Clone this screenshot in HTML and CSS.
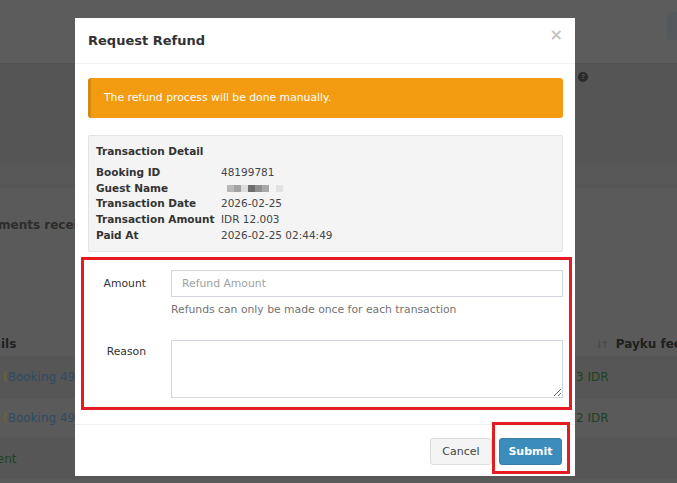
FILE: index.html
```html
<!DOCTYPE html>
<html lang="en">

<head>
    <meta charset="UTF-8">
    <meta name="viewport" content="width=device-width, initial-scale=1.0">
    <title>Request Refund</title>
    <link rel="stylesheet" href="styles.css">
</head>

<body>

    <!-- page behind the dimmed backdrop -->
    <div class="page">
        <div class="topbar">
            <span class="top-btn"></span>
        </div>
        <div class="summary">
            <span class="help-dot">?</span>
        </div>
        <div class="band"></div>
        <div class="card">
            <div class="card-title">Payments received</div>
            <div class="table">
                <div class="row head">
                    <span class="cell-left">Details</span>
                    <span class="cell-right"><span class="sort">&#8595;&#8593;</span>Payku fees</span>
                </div>
                <div class="row">
                    <span class="cell-left"><span class="paren">(</span>Booking 4974</span>
                    <span class="cell-right money">3 IDR</span>
                </div>
                <div class="row">
                    <span class="cell-left"><span class="paren">(</span>Booking 4961</span>
                    <span class="cell-right money">2 IDR</span>
                </div>
                <div class="row">
                    <span class="cell-left money">Payment</span>
                </div>
            </div>
        </div>
    </div>

    <div class="modal">
        <div class="modal-header">
            <h4>Request Refund</h4>
            <span class="close">&times;</span>
        </div>

        <div class="modal-body">
            <div class="alert">The refund process will be done manually.</div>

            <div class="detail">
                <div class="detail-title">Transaction Detail</div>
                <div class="detail-grid">
                    <span class="k">Booking ID</span><span class="v">48199781</span>
                    <span class="k">Guest Name</span>
                    <span class="v blur">
                        <i style="background:#b8b8b8"></i><i style="background:#a2a2a2"></i><i style="background:#dcdcdc"></i><i style="background:#6e6e6e"></i><i style="background:#909090"></i><i style="background:#a8a8a8"></i><i style="background:#f4f4f4"></i><i style="background:#e2e2e2"></i>
                    </span>
                    <span class="k">Transaction Date</span><span class="v">2026-02-25</span>
                    <span class="k">Transaction Amount</span><span class="v">IDR 12.003</span>
                    <span class="k">Paid At</span><span class="v">2026-02-25 02:44:49</span>
                </div>
            </div>

            <div class="mark form">
                <div class="form-row">
                    <label>Amount</label>
                    <div class="field">
                        <input type="text" placeholder="Refund Amount">
                        <p class="help">Refunds can only be made once for each transaction</p>
                    </div>
                </div>
                <div class="form-row">
                    <label>Reason</label>
                    <div class="field">
                        <textarea></textarea>
                    </div>
                </div>
            </div>
        </div>

        <div class="modal-footer">
            <button class="btn btn-default">Cancel</button><span class="mark submit-mark"><button class="btn btn-primary">Submit</button></span>
        </div>
    </div>

</body>

</html>
```

FILE: styles.css
```css
body {
    margin: 0;
    font-family: "DejaVu Sans", Verdana, sans-serif;
    background-color: #5a5a5a;
    overflow: hidden;
}

/* background page (already dimmed) */
.page {
    height: 483px;
}

.topbar {
    height: 63px;
    background-color: #5c5c5c;
    border-bottom: 1px solid #535353;
    display: flex;
    justify-content: flex-end;
    align-items: flex-start;
}

.top-btn {
    width: 20px;
    height: 28px;
    margin-top: 12px;
    margin-right: -10px;
    background-color: #545a5c;
    border-radius: 4px;
}

.summary {
    height: 99px;
    background-color: #555;
    position: relative;
}

.help-dot {
    position: absolute;
    left: 578px;
    top: 8px;
    width: 10px;
    height: 10px;
    border-radius: 50%;
    background-color: #2a2a2a;
    color: #555;
    font-size: 7px;
    font-weight: bold;
    text-align: center;
    line-height: 10px;
}

.band {
    height: 25px;
    background-color: #575757;
}

.card {
    background-color: #5a5a5a;
    padding-top: 30px;
}

.card-title {
    font-size: 12px;
    font-weight: bold;
    color: #2c2c2c;
    margin-left: -26px;
    white-space: nowrap;
}

.table {
    margin-top: 100px;
}

.row {
    display: flex;
    justify-content: space-between;
    align-items: center;
    height: 40px;
    border-top: 1px solid #545454;
    font-size: 12px;
    color: #2f4b63;
    white-space: nowrap;
}

.row:nth-child(even) {
    background-color: #565656;
}

.row.head {
    height: 24px;
    border-top: none;
    font-weight: bold;
    color: #202020;
    background-color: #5a5a5a;
}

.cell-left {
    margin-left: -31px;
}

.row:not(.head) .cell-left {
    margin-left: 3px;
}

.row:last-child .cell-left {
    margin-left: -36px;
}

.cell-right {
    width: 101px;
}

.row.head .cell-right {
    width: 87px;
    margin-right: -5px;
}

.sort {
    color: #4a4a4a;
    font-size: 10px;
    letter-spacing: -3px;
    margin-right: 10px;
}

.paren {
    color: #6e6a2a;
}

.money {
    color: #1f4321;
}

/* modal */
.modal {
    position: fixed;
    left: 75px;
    top: 18px;
    width: 500px;
    height: 458px;
    background-color: #fff;
    color: #333;
}

.modal-header {
    height: 45px;
    border-bottom: 1px solid #f0f0f0;
    display: flex;
    align-items: center;
    justify-content: space-between;
    padding: 0 13px;
}

.modal-header h4 {
    margin: 0;
    font-size: 13px;
    font-weight: bold;
    color: #333;
}

.close {
    color: #c4c4c4;
    font-size: 16px;
    font-weight: bold;
    margin-top: -12px;
    margin-right: -1px;
}

.modal-body {
    padding: 14px 12px 0 13px;
}

.alert {
    height: 40px;
    box-sizing: border-box;
    background-color: #f39c12;
    border-left: 3px solid #d68910;
    border-radius: 3px;
    color: #fff;
    font-size: 10.8px;
    line-height: 40px;
    padding-left: 13px;
}

.detail {
    margin-top: 17px;
    background-color: #f4f4f4;
    border: 1px solid #e3e3e3;
    border-radius: 2px;
    padding: 9px 8px 9px 7px;
    height: 117px;
    box-sizing: border-box;
}

.detail-title {
    font-size: 10.5px;
    font-weight: bold;
    color: #333;
    margin-bottom: 8px;
}

.detail-grid {
    display: grid;
    grid-template-columns: 125px 1fr;
    font-size: 10.5px;
    line-height: 15.7px;
}

.k {
    font-weight: bold;
    color: #333;
}

.v {
    color: #444;
}

.blur {
    display: flex;
    align-items: center;
    padding-left: 6px;
}

.blur i {
    width: 7px;
    height: 7px;
}

.mark {
    border: 3px solid #e51b24;
}

.form {
    margin: 5px -9px 0 -7px;
    padding: 10px 6px 9px 0;
}

.form-row {
    display: flex;
}

.form-row + .form-row {
    margin-top: 22px;
}

.form-row label {
    width: 62px;
    text-align: right;
    font-size: 10.8px;
    color: #333;
    padding-top: 7px;
    margin-right: 25px;
}

.form-row + .form-row label {
    padding-top: 5px;
}

.field {
    flex: 1;
}

input,
textarea {
    display: block;
    width: 100%;
    box-sizing: border-box;
    border: 1px solid #d2d6de;
    font-family: inherit;
    font-size: 10.8px;
    margin: 0;
}

input {
    height: 27px;
    padding: 0 10px;
}

input::placeholder {
    color: #a0a0a0;
}

textarea {
    height: 58px;
    resize: vertical;
}

.help {
    margin: 5px 0 0;
    font-size: 10.8px;
    line-height: 16px;
    color: #737373;
}

.modal-footer {
    margin-top: 14px;
    border-top: 1px solid #f0f0f0;
    display: flex;
    justify-content: flex-end;
    align-items: flex-start;
    padding: 0 5px 0 0;
}

.btn {
    font-family: inherit;
    font-size: 11px;
    height: 27px;
    border-radius: 3px;
    cursor: pointer;
}

.btn-default {
    margin-top: 13px;
    width: 62px;
    background-color: #f4f4f4;
    border: 1px solid #ddd;
    color: #444;
}

.btn-primary {
    width: 63px;
    background-color: #3c8dbc;
    border: 1px solid #367fa9;
    color: #fff;
    font-weight: bold;
}

.submit-mark {
    margin-top: -3px;
    padding: 13px 5px 6px 4px;
}
```
